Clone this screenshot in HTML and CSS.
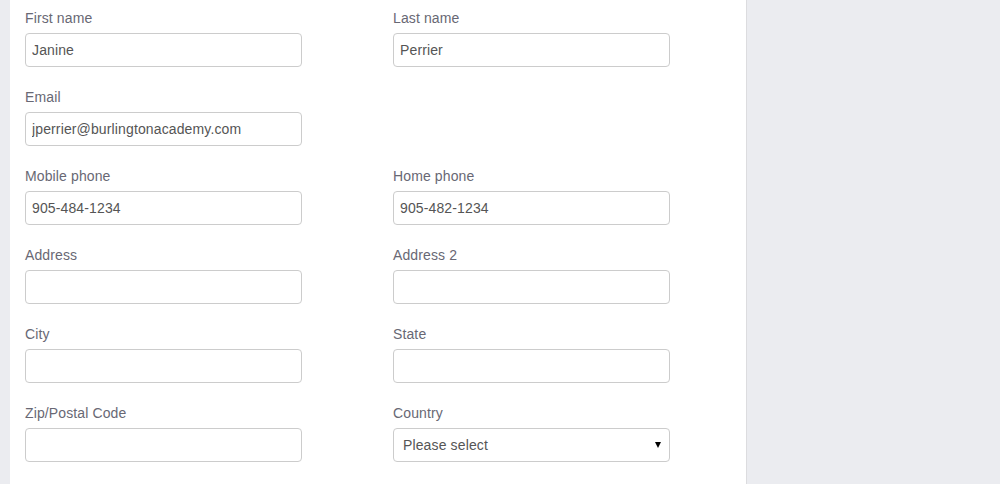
FILE: index.html
```html
<!DOCTYPE html>
<html>
<head>
<meta charset="utf-8">
<link rel="stylesheet" href="styles.css">
</head>
<body>
<div class="page">
  <form class="panel">
    <div class="row">
      <div class="field"><label>First name</label><input class="control" value="Janine"></div>
      <div class="field"><label>Last name</label><input class="control" value="Perrier"></div>
    </div>
    <div class="row">
      <div class="field"><label>Email</label><input class="control" value="jperrier@burlingtonacademy.com"></div>
    </div>
    <div class="row">
      <div class="field"><label>Mobile phone</label><input class="control" value="905-484-1234"></div>
      <div class="field"><label>Home phone</label><input class="control" value="905-482-1234"></div>
    </div>
    <div class="row">
      <div class="field"><label>Address</label><input class="control" value=""></div>
      <div class="field"><label>Address 2</label><input class="control" value=""></div>
    </div>
    <div class="row">
      <div class="field"><label>City</label><input class="control" value=""></div>
      <div class="field"><label>State</label><input class="control" value=""></div>
    </div>
    <div class="row">
      <div class="field"><label>Zip/Postal Code</label><input class="control" value=""></div>
      <div class="field"><label>Country</label>
        <div class="select-wrap">
          <select class="control select"><option>Please select</option></select>
          <span class="arrow"></span>
        </div>
      </div>
    </div>
  </form>
</div>
</body>
</html>
```
FILE: styles.css
```css
html, body {
  margin: 0;
  padding: 0;
  background: #ebecf0;
  font-family: "Liberation Sans", Arial, sans-serif;
  font-size: 14px;
}
.page {
  display: flex;
  min-height: 100vh;
}
.panel {
  margin: 0 0 0 10px;
  width: 736px;
  background: #fff;
  border-right: 1px solid #dcdcdf;
  padding-top: 8px;
  box-sizing: content-box;
}
.row {
  display: grid;
  grid-template-columns: 368px 368px;
}
.field {
  padding: 0 15px;
  margin-bottom: 20px;
  display: flex;
  flex-direction: column;
  align-items: flex-start;
}
label {
  display: block;
  line-height: 20px;
  margin-bottom: 5px;
  color: #686874;
  letter-spacing: 0.12px;
}
.control {
  width: 277px;
  height: 34px;
  box-sizing: border-box;
  border: 1px solid #ccc;
  border-radius: 4px;
  padding: 6px 6px;
  font-family: "Liberation Sans", Arial, sans-serif;
  font-size: 14px;
  letter-spacing: 0.13px;
  color: #555;
  background: #fff;
  outline: none;
  margin: 0;
}
.select-wrap {
  position: relative;
  width: 277px;
}
.select {
  appearance: none;
  -webkit-appearance: none;
  padding: 6px 20px 6px 9px;
}
.arrow {
  position: absolute;
  right: 9px;
  top: 14px;
  width: 0;
  height: 0;
  border-left: 3.5px solid transparent;
  border-right: 3.5px solid transparent;
  border-top: 6px solid #000;
}
```
